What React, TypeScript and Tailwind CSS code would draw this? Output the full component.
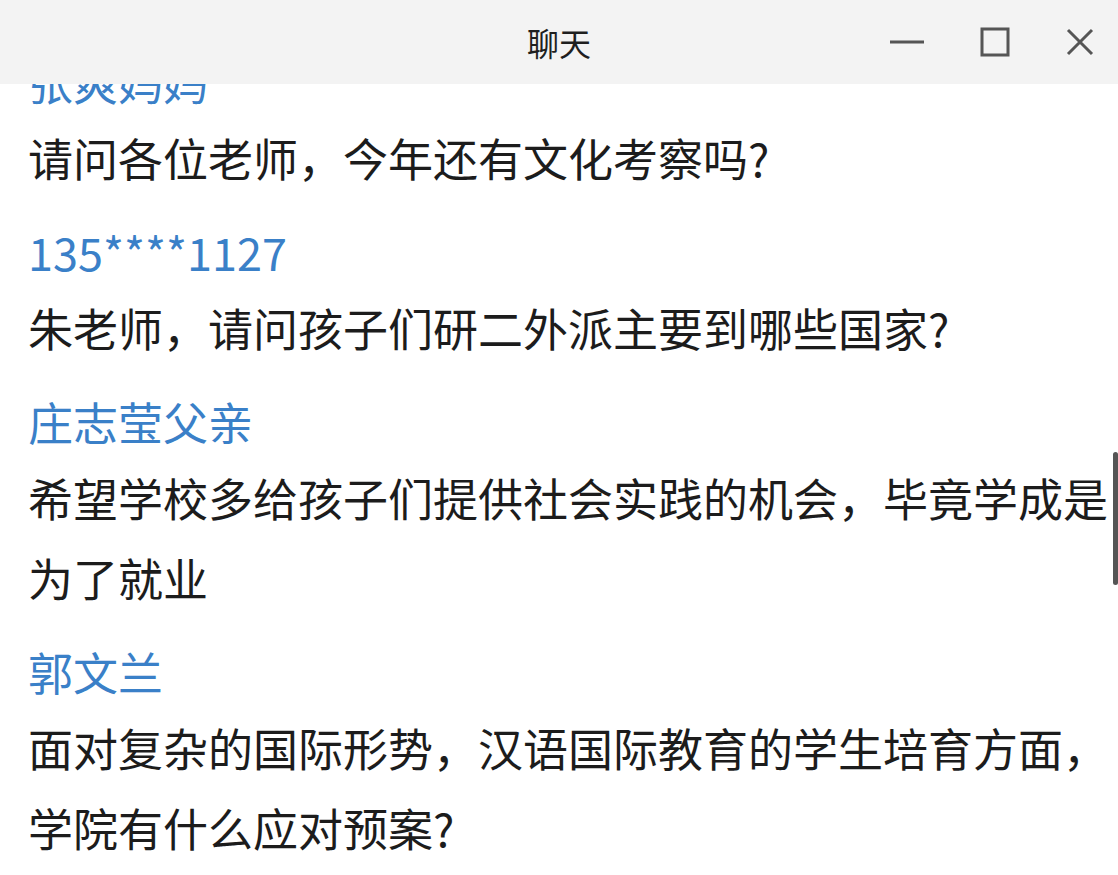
import React from 'react';

const MESSAGES = [
  { name: '张爽妈妈', text: '请问各位老师，今年还有文化考察吗?' },
  { name: '135****1127', text: '朱老师，请问孩子们研二外派主要到哪些国家?' },
  { name: '庄志莹父亲', text: '希望学校多给孩子们提供社会实践的机会，毕竟学成是为了就业' },
  { name: '郭文兰', text: '面对复杂的国际形势，汉语国际教育的学生培育方面，学院有什么应对预案?' },
];

const FONT = { fontFamily: '"Noto Sans CJK SC", "Noto Sans", sans-serif' };

export default function App() {
  return (
    <div className="flex h-[875px] w-[1118px] flex-col overflow-hidden bg-white" style={FONT}>
      {/* 标题栏 */}
      <div className="relative z-10 flex h-[84px] shrink-0 items-center justify-center bg-[#f3f3f3]">
        <span className="text-[32px] text-[#1f1f1f]">聊天</span>
        <div className="absolute right-[22px] top-0 flex h-full items-center gap-[52px] text-[#555]">
          <svg width="38" height="38" viewBox="0 0 38 38">
            <path d="M2 19h34" stroke="currentColor" strokeWidth="3" />
          </svg>
          <svg width="34" height="34" viewBox="0 0 34 34">
            <rect x="4" y="4" width="26" height="26" fill="none" stroke="currentColor" strokeWidth="3" />
          </svg>
          <svg width="32" height="32" viewBox="0 0 32 32">
            <path d="M4 4l24 24M28 4L4 28" stroke="currentColor" strokeWidth="3" />
          </svg>
        </div>
      </div>

      {/* 消息列表（已滚动） */}
      <div className="relative flex-1 overflow-hidden">
        <div className="mt-[-38px] flex flex-col gap-[18px] pl-[28px] pr-[4px]">
          {MESSAGES.map((m) => (
            <div key={m.name}>
              <div className="text-[45px] leading-[72px] text-[#3a80c8]">{m.name}</div>
              <div className="text-[45px] leading-[80px] text-[#1c1c1c]">{m.text}</div>
            </div>
          ))}
        </div>
        {/* 滚动条 */}
        <div className="absolute right-0 top-[368px] h-[133px] w-[5px] rounded-full bg-[#555]" />
      </div>
    </div>
  );
}
